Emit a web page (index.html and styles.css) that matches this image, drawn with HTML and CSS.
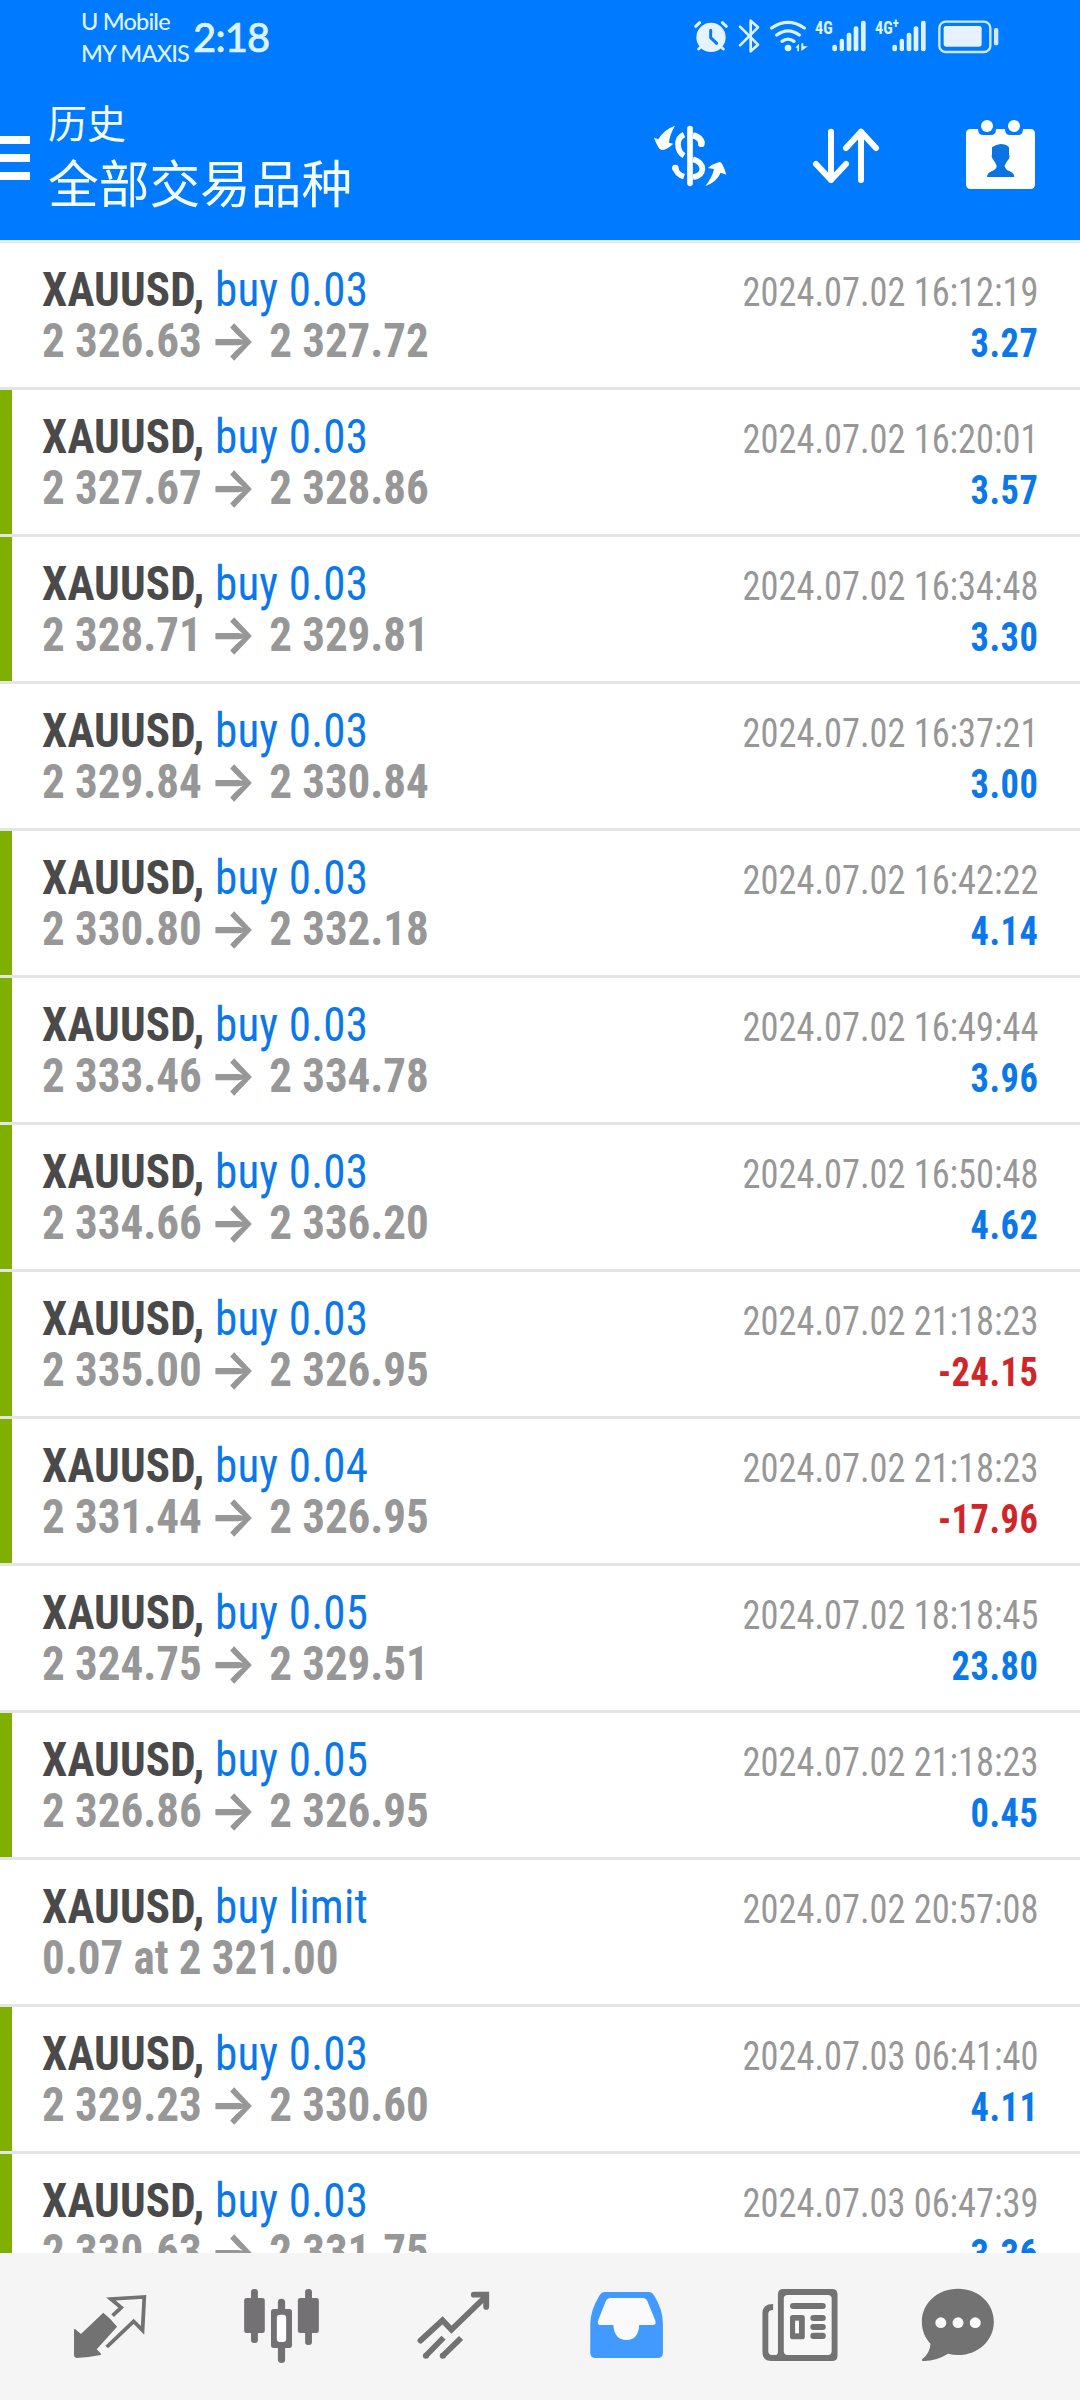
FILE: index.html
```html
<!DOCTYPE html>
<html lang="zh-CN">
<head>
<meta charset="utf-8">
<title>历史</title>
<link rel="stylesheet" href="styles.css">
</head>
<body>
<svg class="defs" width="0" height="0"><defs>
<symbol id="bars" viewBox="576 0 180 216"><g fill="#dcf3ff"><rect x="637" y="134" width="14" height="20" rx="6"/><rect x="659" y="116" width="13" height="38" rx="6"/><rect x="680" y="98" width="14" height="56" rx="6"/><rect x="701" y="79" width="14" height="75" rx="6"/><rect x="723" y="62" width="14" height="92" rx="6"/></g></symbol>
</defs></svg>
<div class="screen">
<header class="header">
  <div class="status">
    <div class="carriers"><span>U Mobile</span><span>MY MAXIS</span></div>
    <div class="clock">2:18</div>
    <div class="indicators">
      <svg width="40" height="72" viewBox="216 0 120 216"><g fill="none" stroke="#dcf3ff" stroke-width="9" stroke-linecap="round"><path d="M227 79l12-11M319 79l-12-11M236 147l10-9M310 147l-10-9"/></g><circle cx="273" cy="112" r="44" fill="#e6f3ff"/><path d="M272 91v22l18 17" fill="none" stroke="#007aff" stroke-width="9" stroke-linecap="round" stroke-linejoin="round"/></svg>
      <svg width="33" height="72" viewBox="336 0 99 216"><path d="M360 80l54 54-22 20V62l22 20-54 54" fill="none" stroke="#dcf3ff" stroke-width="8" stroke-linecap="round" stroke-linejoin="round"/></svg>
      <svg width="47" height="72" viewBox="435 0 141 216"><g fill="none" stroke="#dcf3ff" stroke-width="10" stroke-linecap="round"><path d="M455 84q49-34 98 0M470 105q34-25 68 0M486 124q18-13 36 0"/></g><circle cx="504" cy="144" r="10" fill="#dcf3ff"/><path d="M526 143l11-12v23h-5v-11zM544 130v23l20-14h-14v-9z" fill="#dcf3ff"/></svg>
      <span class="signal"><svg width="60" height="72"><use href="#bars"/></svg><b>4G</b></span>
      <span class="signal"><svg width="60" height="72"><use href="#bars"/></svg><b>4G<i>+</i></b></span>
      <svg width="74" height="72" viewBox="936 0 222 216"><rect x="958" y="65" width="153" height="91" rx="19" fill="none" stroke="#cfeaff" stroke-width="7"/><rect x="971" y="78" width="114" height="62" rx="7" fill="#e8f1ff"/><rect x="1122" y="84" width="13" height="52" rx="5" fill="#cfeaff"/></svg>
    </div>
  </div>
  <div class="toolbar">
    <div class="menu"><span></span><span></span><span></span></div>
    <div class="titles"><div class="sub">历史</div><div class="title">全部交易品种</div></div>
    <div class="actions">
      <svg width="154" height="168" viewBox="-18 216 462 504"><g fill="none" stroke="#fff"><path d="M210 386v164" stroke-width="17" stroke-linecap="round"/><path d="M192 404q-19 9-18 30 1 23 18 33" stroke-width="17"/><path d="M219 406q21 4 27 24" stroke-width="19"/><path d="M219 478q27 8 28 29-1 20-28 25M192 530q-22-7-26-26" stroke-width="17"/></g><circle cx="244" cy="431" r="10" fill="#fff"/><circle cx="166" cy="504" r="10" fill="#fff"/><path d="M165 377q-17 29-18 51l13 3q-20 19-35 19-10-1-23-37l13 5q16-29 50-41zM256 558q21-26 26-51l-18-3q13-12 34-18 9-3 21 38l-17-6q-12 28-46 40z" fill="#fff"/></svg>
      <svg width="154" height="168" viewBox="444 216 462 504"><path d="M633 395v145M588 492l45 48 45-48M723 540V395M678 444l45-49 45 49" fill="none" stroke="#fff" stroke-width="18" stroke-linecap="round" stroke-linejoin="round"/></svg>
      <svg width="154" height="168" viewBox="906 216 462 504"><path d="M1052 387h22q0 18 16 18h23q15 0 15-18h27q0 18 15 18h24q15 0 15-18h22q14 0 14 14v152q0 14-14 14h-179q-14 0-14-14V401q0-14 14-14z" fill="#fff"/><circle cx="1101" cy="378" r="18" fill="#fff"/><circle cx="1182" cy="378" r="18" fill="#fff"/><path d="M1116 442q10-8 25-10 17 0 26 10v22q4 3 0 12-12 15-13 22 4 13 14 15 15 6 15 18h-82q0-12 15-18 13-4 14-15-3-9-13-23-4-8-1-11z" fill="#0b74e2"/></svg>
    </div>
  </div>
</header>
<main class="list">
  <div class="row"><div class="deal"><div class="name"><b>XAUUSD,</b> buy 0.03</div><div class="price">2 326.63 <i>→</i> 2 327.72</div></div><div class="info"><div class="time">2024.07.02 16:12:19</div><div class="profit">3.27</div></div></div>
  <div class="row mark"><div class="deal"><div class="name"><b>XAUUSD,</b> buy 0.03</div><div class="price">2 327.67 <i>→</i> 2 328.86</div></div><div class="info"><div class="time">2024.07.02 16:20:01</div><div class="profit">3.57</div></div></div>
  <div class="row mark"><div class="deal"><div class="name"><b>XAUUSD,</b> buy 0.03</div><div class="price">2 328.71 <i>→</i> 2 329.81</div></div><div class="info"><div class="time">2024.07.02 16:34:48</div><div class="profit">3.30</div></div></div>
  <div class="row"><div class="deal"><div class="name"><b>XAUUSD,</b> buy 0.03</div><div class="price">2 329.84 <i>→</i> 2 330.84</div></div><div class="info"><div class="time">2024.07.02 16:37:21</div><div class="profit">3.00</div></div></div>
  <div class="row mark"><div class="deal"><div class="name"><b>XAUUSD,</b> buy 0.03</div><div class="price">2 330.80 <i>→</i> 2 332.18</div></div><div class="info"><div class="time">2024.07.02 16:42:22</div><div class="profit">4.14</div></div></div>
  <div class="row mark"><div class="deal"><div class="name"><b>XAUUSD,</b> buy 0.03</div><div class="price">2 333.46 <i>→</i> 2 334.78</div></div><div class="info"><div class="time">2024.07.02 16:49:44</div><div class="profit">3.96</div></div></div>
  <div class="row mark"><div class="deal"><div class="name"><b>XAUUSD,</b> buy 0.03</div><div class="price">2 334.66 <i>→</i> 2 336.20</div></div><div class="info"><div class="time">2024.07.02 16:50:48</div><div class="profit">4.62</div></div></div>
  <div class="row mark"><div class="deal"><div class="name"><b>XAUUSD,</b> buy 0.03</div><div class="price">2 335.00 <i>→</i> 2 326.95</div></div><div class="info"><div class="time">2024.07.02 21:18:23</div><div class="profit loss">-24.15</div></div></div>
  <div class="row mark"><div class="deal"><div class="name"><b>XAUUSD,</b> buy 0.04</div><div class="price">2 331.44 <i>→</i> 2 326.95</div></div><div class="info"><div class="time">2024.07.02 21:18:23</div><div class="profit loss">-17.96</div></div></div>
  <div class="row"><div class="deal"><div class="name"><b>XAUUSD,</b> buy 0.05</div><div class="price">2 324.75 <i>→</i> 2 329.51</div></div><div class="info"><div class="time">2024.07.02 18:18:45</div><div class="profit">23.80</div></div></div>
  <div class="row mark"><div class="deal"><div class="name"><b>XAUUSD,</b> buy 0.05</div><div class="price">2 326.86 <i>→</i> 2 326.95</div></div><div class="info"><div class="time">2024.07.02 21:18:23</div><div class="profit">0.45</div></div></div>
  <div class="row"><div class="deal"><div class="name"><b>XAUUSD,</b> buy limit</div><div class="price">0.07 at 2 321.00</div></div><div class="info"><div class="time">2024.07.02 20:57:08</div></div></div>
  <div class="row mark"><div class="deal"><div class="name"><b>XAUUSD,</b> buy 0.03</div><div class="price">2 329.23 <i>→</i> 2 330.60</div></div><div class="info"><div class="time">2024.07.03 06:41:40</div><div class="profit">4.11</div></div></div>
  <div class="row mark"><div class="deal"><div class="name"><b>XAUUSD,</b> buy 0.03</div><div class="price">2 330.63 <i>→</i> 2 331.75</div></div><div class="info"><div class="time">2024.07.03 06:47:39</div><div class="profit">3.36</div></div></div>
</main>
<nav class="nav">
  <svg preserveAspectRatio="none" viewBox="69.7 369 499.5 441"><path d="M300 548q21 17 40 42l-59 68 13 14-2 3q-36 7-70 9-7-2-7-8v-79l4 1 16 14z" fill="#727272"/><path d="M327 557l25-24-30-26 97-6-5 100-26-27-78 77" fill="none" stroke="#727272" stroke-width="11"/></svg>
  <svg preserveAspectRatio="none" viewBox="569.2 369 499.5 441"><g fill="#737173"><rect x="709" y="504" width="60" height="105" rx="7"/><rect x="729" y="477" width="20" height="162" rx="9"/><rect x="865" y="504" width="61" height="105" rx="7"/><rect x="886" y="477" width="20" height="168" rx="9"/><path d="M795 537h12v-22q0-9 10-9t11 9v22h12q8 0 8 8v101q0 8-8 8h-12v36q0 9-10 9t-11-9v-36h-12q-8 0-8-8V545q0-8 8-8z"/></g><rect x="804" y="554" width="27" height="82" rx="9" fill="#fff"/></svg>
  <svg preserveAspectRatio="none" viewBox="1068.7 369 499.5 441"><g fill="none" stroke="#727272" stroke-width="17"><path d="M1221 632l64-61 26 28 96-96" stroke-linecap="round"/><path d="M1376 494h36v37" stroke-linecap="round" stroke-width="17"/><path d="M1237 677l51-54M1286 677l53-53"/></g><g fill="#727272"><circle cx="1237" cy="677" r="9"/><circle cx="1286" cy="677" r="9"/></g></svg>
  <svg preserveAspectRatio="none" viewBox="0 369 499.5 441"><path d="M187 486h130q8 0 14 10 26 43 26 86v86q0 16-16 16H162q-16 0-16-16v-86q0-40 27-86 6-10 14-10z" fill="#429aff"/><path d="M205 504h93q9 0 14 10l23 58q3 13-7 13h-40q-2 45-37 45t-38-45h-38q-10 0-6-14l22-57q5-10 14-10z" fill="#fafafc"/></svg>
  <svg preserveAspectRatio="none" viewBox="499.5 369 499.5 441"><path d="M707 477h141q16 0 16 16v184q0 16-16 16H672q-26 0-26-26v-118q0-27 31-27v18q-14 0-14 12v112q0 11 11 11h8q9 0 9-10V493q0-16 16-16z" fill="#737373"/><rect x="708" y="495" width="139" height="180" rx="11" fill="#f8f8f8"/><g fill="#737373"><rect x="726" y="519" width="104" height="18" rx="9"/><rect x="726" y="555" width="43" height="73" rx="8"/><rect x="785" y="555" width="45" height="18" rx="9"/><rect x="785" y="582" width="45" height="18" rx="9"/><rect x="785" y="608" width="45" height="19" rx="9"/></g><rect x="741" y="572" width="11" height="38" fill="#fff"/></svg>
  <svg preserveAspectRatio="none" viewBox="999 369 499.5 441"><path d="M1214 476c60 0 104 44 104 99s-44 100-104 100q-14 0-29-4-33 21-69 22-11 0-5-7 22-18 23-45c-16-18-25-39-25-66 0-55 45-99 105-99z" fill="#727272"/><g fill="#fafafa"><circle cx="1164" cy="578" r="16"/><circle cx="1214" cy="578" r="16"/><circle cx="1264" cy="578" r="16"/></g></svg>
</nav>
</div>
</body>
</html>
```
FILE: styles.css
```css
* { box-sizing: border-box; }
body { margin: 0; background: #fff; font-family: "Roboto Condensed", Roboto, sans-serif; font-stretch: 75%; }
.defs { display: block; height: 0; }
svg { display: block; }
.screen { width: 1080px; height: 2400px; display: flex; flex-direction: column; overflow: hidden; }
.header { height: 243px; flex: none; background: #007aff; border-bottom: 3px solid #e6e8f2; }
.status { height: 72px; display: flex; color: #dcf3ff; font-family: Lato, sans-serif; font-stretch: 100%; font-weight: 500; }
.carriers { display: flex; flex-direction: column; width: 112px; margin-left: 81px; padding-top: 5px; font-size: 23.5px; line-height: 32px; letter-spacing: -0.8px; white-space: nowrap; }
.clock { flex: 1; font-size: 40px; line-height: 75px; letter-spacing: -0.8px; -webkit-text-stroke: 0.6px #dcf3ff; }
.indicators { display: flex; width: 388px; }
.signal { display: flex; position: relative; }
.signal b { position: absolute; left: 3px; top: 18px; font: bold 18px/19px "Roboto Condensed", Roboto, sans-serif; font-stretch: 75%; transform: scaleX(0.9); transform-origin: left; }
.signal i { font-style: normal; font-size: 14px; vertical-align: 6px; line-height: 0; }
.toolbar { height: 168px; display: flex; color: #f4fdff; }
.menu { width: 30px; margin-right: 18px; padding-top: 64px; display: flex; flex-direction: column; gap: 10px; }
.menu span { height: 8px; background: #fff; }
.titles { flex: 1; font-family: "Noto Sans CJK SC", sans-serif; font-stretch: normal; }
.sub { font-size: 39px; line-height: 56px; margin-top: 21px; }
.title { font-size: 50.7px; line-height: 65px; }
.actions { display: flex; width: 466px; }
.list { height: 2010px; flex: none; overflow: hidden; }
.row { height: 147px; display: flex; justify-content: space-between; padding: 21px 42px 0; border-bottom: 3px solid #e4e4e4; }
.mark { background: linear-gradient(#7fb000, #7fb000) 0 0 / 12px 144px no-repeat; }
.deal { transform: scaleX(0.938); transform-origin: left; }
.name, .price { font-size: 48px; line-height: 51px; white-space: pre; }
.name { color: #0a78ea; letter-spacing: 0.2px; }
.name b { color: #4a4a4a; }
.price { color: #979797; font-weight: bold; letter-spacing: -0.05px; }
.price i { display: inline-block; width: 52px; margin: 0 1px 0 -3px; font: 700 53px/40px Inter, sans-serif; vertical-align: -2px; }
.info { text-align: right; font-size: 40px; line-height: 51px; padding-top: 3px; transform: scaleX(0.909); transform-origin: right; }
.time { color: #979797; }
.profit { color: #0a78ea; font-weight: bold; letter-spacing: 0.6px; }
.loss { color: #d0262a; }
.nav { flex: 1; display: flex; padding: 0 24px; background: #f5f5f5; }
.nav svg { width: 172px; height: 147px; }
```
